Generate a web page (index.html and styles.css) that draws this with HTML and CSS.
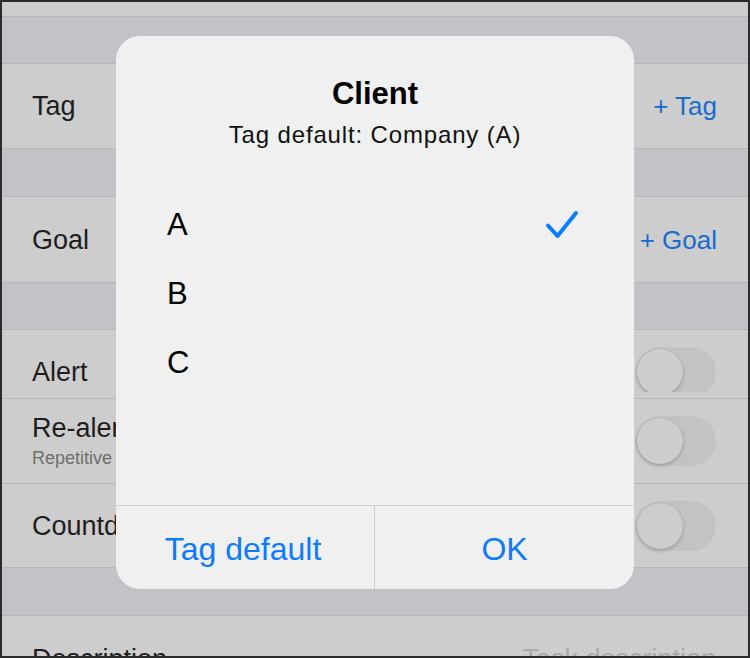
FILE: index.html
```html
<!DOCTYPE html>
<html>
<head>
<meta charset="utf-8">
<link rel="stylesheet" href="styles.css">
</head>
<body>
<div class="screen">
  <div class="list">
    <div class="cell stub"></div>
    <div class="gap"></div>
    <div class="cell row-tag"><span class="label">Tag</span><span class="accessory">+ Tag</span></div>
    <div class="gap gap-b"></div>
    <div class="cell row-goal"><span class="label">Goal</span><span class="accessory">+ Goal</span></div>
    <div class="gap"></div>
    <div class="cell row-alert">
      <span class="label alert-label">Alert</span>
      <div class="toggle-clip"><div class="toggle"><div class="knob"></div></div></div>
    </div>
    <div class="cell row-realert">
      <div class="label-group">
        <span class="label">Re-alert</span>
        <span class="sublabel">Repetitive alert</span>
      </div>
      <div class="toggle"><div class="knob"></div></div>
    </div>
    <div class="cell row-count">
      <span class="label">Countdown</span>
      <div class="toggle"><div class="knob"></div></div>
    </div>
    <div class="gap gap-b"></div>
    <div class="cell row-desc">
      <span class="label">Description</span>
      <span class="placeholder">Task description</span>
    </div>
  </div>

  <div class="dialog">
    <div class="dialog-head">
      <div class="dialog-title">Client</div>
      <div class="dialog-msg">Tag default: Company (A)</div>
    </div>
    <div class="options">
      <div class="option"><span>A</span>
        <svg class="check" width="34" height="30" viewBox="0 0 34 30"><path d="M3 15.5 L12.5 26 L31 3" fill="none" stroke="#0b7bff" stroke-width="4" stroke-linecap="round" stroke-linejoin="round"/></svg>
      </div>
      <div class="option"><span>B</span></div>
      <div class="option"><span>C</span></div>
    </div>
    <div class="spacer"></div>
    <div class="buttons">
      <div class="btn btn-left">Tag default</div>
      <div class="btn btn-right">OK</div>
    </div>
  </div>
</div>
</body>
</html>
```

FILE: styles.css
```css
html, body {
  margin: 0;
  padding: 0;
  background: #2b2b2b;
}

.screen {
  width: 750px;
  height: 658px;
  box-sizing: border-box;
  border: 2px solid #2b2b2b;
  background: #c3c2c7;
  position: relative;
  overflow: hidden;
  font-family: "Liberation Sans", Arial, sans-serif;
}

.list {
  display: flex;
  flex-direction: column;
}

.cell {
  background: #cdcdcd;
  border-bottom: 1px solid #b6b6ba;
  display: flex;
  align-items: center;
  justify-content: space-between;
  padding: 0 32px 0 30px;
  flex-shrink: 0;
}

.gap {
  height: 46px;
  border-bottom: 1px solid #b6b6ba;
  flex-shrink: 0;
}

.gap-b {
  height: 47px;
}

.stub { height: 14px; }
.row-tag { height: 84px; }
.row-goal { height: 85px; }
.row-alert {
  height: 68px;
  align-items: flex-start;
}
.row-realert { height: 84px; }
.row-count { height: 83px; }
.row-desc { height: 86px; }

.label {
  font-size: 27px;
  line-height: 32px;
  color: #1d1d1d;
}

.alert-label {
  margin-top: 26px;
}

.accessory {
  font-size: 26px;
  line-height: 32px;
  color: #166ccf;
  margin-right: -1px;
}

.label-group {
  display: flex;
  flex-direction: column;
  margin-top: 1px;
}

.sublabel {
  font-size: 18px;
  line-height: 25px;
  color: #6e6e6e;
  margin-top: 2px;
}

.placeholder {
  font-size: 27px;
  line-height: 32px;
  color: #aaaaaa;
}

.toggle-clip {
  margin-top: 17px;
  height: 45px;
  overflow: hidden;
}

.toggle {
  width: 81px;
  height: 50px;
  border-radius: 25px;
  background: #c3c3c3;
  box-sizing: border-box;
  padding: 2px;
  display: flex;
  align-items: center;
}

.knob {
  width: 46px;
  height: 46px;
  border-radius: 50%;
  background: #cdcdcd;
  box-shadow: 0 2px 4px rgba(0, 0, 0, 0.18), 0 0 0 0.5px rgba(0, 0, 0, 0.08);
}

.dialog {
  position: absolute;
  left: 114px;
  top: 34px;
  width: 518px;
  height: 553px;
  background: #f0f0f0;
  border-radius: 24px;
  display: flex;
  flex-direction: column;
  overflow: hidden;
}

.dialog-head {
  padding-top: 39px;
  display: flex;
  flex-direction: column;
  align-items: center;
  gap: 7px;
}

.dialog-title {
  font-size: 31px;
  line-height: 38px;
  font-weight: bold;
  color: #000;
}

.dialog-msg {
  font-size: 24px;
  line-height: 30px;
  letter-spacing: 0.85px;
  color: #111;
}

.options {
  margin-top: 40px;
  display: flex;
  flex-direction: column;
}

.option {
  height: 69px;
  display: flex;
  align-items: center;
  justify-content: space-between;
  padding: 0 55px 0 51px;
  font-size: 31px;
  color: #000;
}

.check {
  display: block;
}

.spacer {
  flex: 1;
}

.buttons {
  height: 83px;
  border-top: 1px solid #cfcfcf;
  display: flex;
}

.btn {
  display: flex;
  align-items: center;
  justify-content: center;
  font-size: 32px;
  color: #0b7bff;
  padding-top: 4px;
  box-sizing: border-box;
}

.btn-left {
  width: 259px;
  flex-shrink: 0;
  border-right: 1px solid #cfcfcf;
  padding-right: 4px;
}

.btn-right {
  flex: 1;
}
```
